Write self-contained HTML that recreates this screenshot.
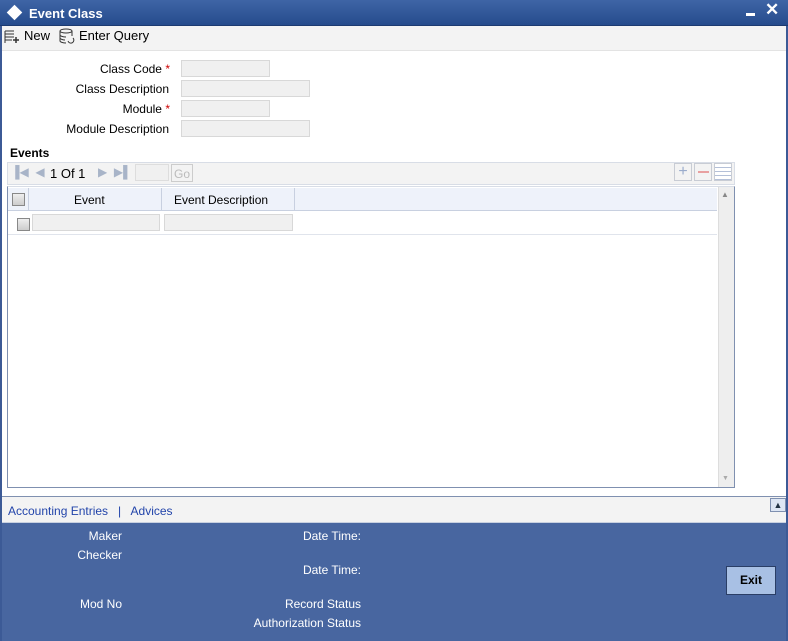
<!DOCTYPE html>
<html><head><style>
*{margin:0;padding:0;box-sizing:border-box}
body{width:788px;height:641px;position:relative;overflow:hidden;font-family:"Liberation Sans",Arial,sans-serif;font-size:12px;color:#000;background:#fff}
.a{position:absolute}
.inp{position:absolute;height:17px;background:#f0f0f0;border:1px solid #d8d8d8}
.lbl{position:absolute;text-align:right;width:170px;left:0}
.star{color:#c00}
.wl{color:#fff;position:absolute;text-align:right}
</style></head><body>
<div class="a" style="left:0;top:0;width:788px;height:641px;border-left:2px solid #3c5a96;border-right:2px solid #3c5a96"></div>
<div class="a" style="left:0;top:0;width:788px;height:26px;background:linear-gradient(#3f65a6,#254b8c);border-bottom:1px solid #1c3a70"></div>
<div class="a" style="left:9px;top:7px;width:11px;height:11px;background:#fff;transform:rotate(45deg)"></div>
<div class="a" style="left:29px;top:6px;color:#fff;font-weight:bold;font-size:13px">Event Class</div>
<div class="a" style="left:746px;top:13px;width:9px;height:3px;background:#fff"></div>
<div class="a" style="left:765px;top:0px;color:#fff;font-size:17px;font-weight:bold">✕</div>
<div class="a" style="left:2px;top:26px;width:784px;height:25px;background:#f3f3f3;border-bottom:1px solid #e3e3e3"></div>
<svg class="a" style="left:4px;top:29px" width="18" height="16"><path d="M1 2h9M1 5h9M1 8h9M1 11h7M1 2v12" stroke="#333" fill="none"/><path d="M12 8v6M9 11h6" stroke="#333" stroke-width="1.5"/></svg>
<div class="a" style="left:24px;top:28px;font-size:13px">New</div>
<svg class="a" style="left:58px;top:28px" width="18" height="17"><ellipse cx="8" cy="3" rx="6" ry="2" stroke="#333" fill="none"/><path d="M2 3v10c0 1 3 2 6 2M14 3v5M2 7c0 1 3 2 6 2M2 10c0 1 3 2 5 2" stroke="#333" fill="none"/><path d="M10 13a3 3 0 1 0 5-3" stroke="#333" fill="none"/></svg>
<div class="a" style="left:79px;top:28px;font-size:13px">Enter Query</div>
<div class="lbl" style="top:62px">Class Code <span class="star">*</span></div>
<div class="inp" style="left:181px;top:60px;width:89px"></div>
<div class="lbl" style="top:82px;width:169px">Class Description</div>
<div class="inp" style="left:181px;top:80px;width:129px"></div>
<div class="lbl" style="top:102px">Module <span class="star">*</span></div>
<div class="inp" style="left:181px;top:100px;width:89px"></div>
<div class="lbl" style="top:122px;width:169px">Module Description</div>
<div class="inp" style="left:181px;top:120px;width:129px"></div>
<div class="a" style="left:10px;top:146px;font-weight:bold">Events</div>
<div class="a" style="left:7px;top:162px;width:728px;height:23px;background:#f3f3f3;border:1px solid #d8dde6"></div>
<div class="a" style="left:11px;top:165px;color:#a8b4c8;font-size:12px">▐◀ &nbsp;◀</div>
<div class="a" style="left:50px;top:166px;font-size:13px">1 Of 1</div>
<div class="a" style="left:98px;top:165px;color:#a8b4c8;font-size:12px">▶ &nbsp;▶▌</div>
<div class="a" style="left:135px;top:164px;width:34px;height:17px;background:#f0f0f0;border:1px solid #ddd"></div>
<div class="a" style="left:171px;top:164px;width:22px;height:18px;border:1px solid #ccc;color:#bbb;padding:2px 0 0 2px">Go</div>
<div class="a" style="left:674px;top:163px;width:18px;height:18px;border:1px solid #c8ccd4;color:#9aaccc;font-size:16px;text-align:center;line-height:16px">+</div>
<div class="a" style="left:694px;top:163px;width:18px;height:18px;border:1px solid #c8ccd4"><div class="a" style="left:3px;top:7px;width:11px;height:2px;background:#e8a0a0"></div></div>
<div class="a" style="left:714px;top:163px;width:18px;height:18px;border:1px solid #c8ccd4;background:repeating-linear-gradient(#fff 0 3px,#b4c0d8 3px 4px)"></div>
<div class="a" style="left:7px;top:186px;width:728px;height:302px;border:1px solid #7f90b0;border-top:1px solid #d8dde6"></div>
<div class="a" style="left:8px;top:188px;width:709px;height:23px;background:#eef2fa;border-bottom:1px solid #c8d0e0"></div>
<div class="a" style="left:28px;top:188px;width:1px;height:23px;background:#c8d0e0"></div>
<div class="a" style="left:161px;top:188px;width:1px;height:23px;background:#c8d0e0"></div>
<div class="a" style="left:294px;top:188px;width:1px;height:23px;background:#c8d0e0"></div>
<div class="a" style="left:12px;top:193px;width:13px;height:13px;border:1px solid #888;background:linear-gradient(#eee,#ccc)"></div>
<div class="a" style="left:74px;top:193px">Event</div>
<div class="a" style="left:174px;top:193px">Event Description</div>
<div class="a" style="left:17px;top:218px;width:13px;height:13px;border:1px solid #888;background:linear-gradient(#eee,#ccc)"></div>
<div class="inp" style="left:32px;top:214px;width:128px"></div>
<div class="inp" style="left:164px;top:214px;width:129px"></div>
<div class="a" style="left:8px;top:234px;width:709px;height:1px;background:#e0e4ec"></div>
<div class="a" style="left:718px;top:187px;width:16px;height:300px;background:#eee;border-left:1px solid #ddd"></div>
<div class="a" style="left:721px;top:190px;font-size:8px;color:#888">▲</div>
<div class="a" style="left:722px;top:475px;font-size:7px;color:#aaa">▼</div>
<div class="a" style="left:2px;top:496px;width:784px;height:27px;background:#f3f3f3;border-top:1px solid #7f90b0;border-bottom:1px solid #c8d0e0"></div>
<div class="a" style="left:8px;top:504px;color:#2244aa">Accounting Entries &nbsp; | &nbsp; Advices</div>
<div class="a" style="left:770px;top:498px;width:16px;height:14px;background:#dde6f4;border:1px solid #7f90b0;font-size:9px;color:#234;text-align:center;line-height:12px">▲</div>
<div class="a" style="left:2px;top:523px;width:784px;height:118px;background:#4866a0"></div>
<div class="wl" style="left:0;width:122px;top:529px">Maker</div>
<div class="wl" style="left:0;width:122px;top:548px">Checker</div>
<div class="wl" style="left:0;width:122px;top:597px">Mod No</div>
<div class="wl" style="left:200px;width:161px;top:529px">Date Time:</div>
<div class="wl" style="left:200px;width:161px;top:563px">Date Time:</div>
<div class="wl" style="left:200px;width:161px;top:597px">Record Status</div>
<div class="wl" style="left:200px;width:161px;top:616px">Authorization Status</div>
<div class="a" style="left:726px;top:566px;width:50px;height:29px;background:#a8c0e4;border:1px solid #2a3e66;text-align:center;line-height:27px;font-weight:bold">Exit</div>
</body></html>
